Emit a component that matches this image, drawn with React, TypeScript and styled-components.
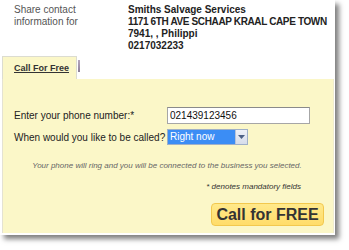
import React from "react";
import styled, { createGlobalStyle } from "styled-components";

const Global = createGlobalStyle`
  html, body { margin: 0; padding: 0; background: #ffffff; }
  body { font-family: "Liberation Sans", Arial, sans-serif; }
  * { box-sizing: border-box; }
`;

const Page = styled.div`
  width: 349px;
  height: 250px;
  overflow: hidden;
`;

const Frame = styled.div`
  position: relative;
  width: 335px;
  height: 235px;
  background: #fff;
  box-shadow: 4px 4px 5px rgba(0, 0, 0, 0.5);
  display: flex;
  flex-direction: column;
  &::after {
    content: "";
    position: absolute;
    left: 10px;
    top: -20px;
    right: -10px;
    bottom: -13px;
    border-right: 2px solid #3a3a3a;
    border-bottom: 2px solid #3a3a3a;
    z-index: -1;
  }
`;

const Header = styled.div`
  display: grid;
  grid-template-columns: 114px 1fr;
  padding: 4px 0 0 14px;
  font-size: 10px;
  line-height: 12px;
  height: 56px;
  white-space: nowrap;
`;

const ShareLabel = styled.div`
  color: #555;
`;

const Contact = styled.div`
  color: #222;
  font-weight: bold;
`;

const CapsLine = styled.span`
  letter-spacing: -0.37px;
`;

const TabBar = styled.div`
  display: flex;
  align-items: flex-start;
  padding-left: 2px;
  height: 23px;
`;

const Tab = styled.div`
  width: 75px;
  height: 23px;
  background: #fbf7c8;
  border: 1px solid #dcdcd0;
  border-bottom: none;
  padding: 6px 0 0 11px;
  font-size: 9px;
  font-weight: bold;
  color: #333;
  text-decoration: underline;
  white-space: nowrap;
`;

const TabStub = styled.div`
  width: 2px;
  height: 12px;
  margin: 4px 0 0 1px;
  background: linear-gradient(180deg, #b6a8c0, #8c7f98);
`;

const Panel = styled.div`
  flex: 1;
  margin: 0 1px 2px 2px;
  background: #fbf7c8;
  border-left: 1px solid #e4e2d2;
  border-right: 1px solid #efecd0;
  padding: 28px 9px 0 11px;
  display: flex;
  flex-direction: column;
`;

const FormGrid = styled.div`
  display: grid;
  grid-template-columns: 153px auto;
  row-gap: 5px;
  align-items: center;
  justify-content: start;
`;

const Label = styled.div`
  font-size: 10px;
  color: #222;
  white-space: nowrap;
`;

const TextInput = styled.div`
  width: 143px;
  height: 17px;
  background: #fff;
  border: 1px solid #a6a6a6;
  border-top-color: #8a8a8a;
  font-size: 10px;
  line-height: 15px;
  padding-left: 2px;
  color: #111;
`;

const Select = styled.div`
  width: 81px;
  height: 16px;
  display: flex;
  border: 1px solid #9fb0c8;
  background: #fff;
`;

const SelectValue = styled.div`
  flex: 1;
  background: #3b8df5;
  color: #fff;
  font-size: 10px;
  line-height: 14px;
  padding-left: 2px;
  white-space: nowrap;
`;

const SelectArrow = styled.div`
  width: 12px;
  background: linear-gradient(180deg, #eef1f8, #d6dcea);
  border-left: 1px solid #b8c4d8;
  display: flex;
  align-items: center;
  justify-content: center;
`;

const Note = styled.div`
  margin-top: 16px;
  font-size: 8px;
  font-style: italic;
  color: #666;
  text-align: center;
  padding-right: 4px;
  white-space: nowrap;
`;

const Mandatory = styled.div`
  margin-top: 12px;
  font-size: 8px;
  font-style: italic;
  color: #333;
  text-align: right;
  padding-right: 23px;
`;

const ButtonRow = styled.div`
  display: flex;
  justify-content: flex-end;
  margin-top: 12px;
`;

const CallButton = styled.div`
  width: 113px;
  height: 23px;
  border: 1px solid #f2c84e;
  border-radius: 4px;
  background: linear-gradient(180deg, #ffe98a, #ffdc6a);
  font-size: 16px;
  font-weight: bold;
  color: #333;
  display: flex;
  align-items: center;
  justify-content: center;
`;

export default function App() {
  return (
    <Page>
      <Global />
      <Frame>
        <Header>
          <ShareLabel>
            Share contact
            <br />
            information for
          </ShareLabel>
          <Contact>
            Smiths Salvage Services
            <br />
            <CapsLine>1171 6TH AVE SCHAAP KRAAL CAPE TOWN</CapsLine>
            <br />
            7941, , Philippi
            <br />
            0217032233
          </Contact>
        </Header>
        <TabBar>
          <Tab>Call For Free</Tab>
          <TabStub />
        </TabBar>
        <Panel>
          <FormGrid>
            <Label>Enter your phone number:*</Label>
            <TextInput>021439123456</TextInput>
            <Label>When would you like to be called?</Label>
            <Select>
              <SelectValue>Right now</SelectValue>
              <SelectArrow>
                <svg width="7" height="4" viewBox="0 0 7 4">
                  <path d="M0 0 L7 0 L3.5 4 Z" fill="#4d6185" />
                </svg>
              </SelectArrow>
            </Select>
          </FormGrid>
          <Note>
            Your phone will ring and you will be connected to the business you selected.
          </Note>
          <Mandatory>* denotes mandatory fields</Mandatory>
          <ButtonRow>
            <CallButton>Call for FREE</CallButton>
          </ButtonRow>
        </Panel>
      </Frame>
    </Page>
  );
}
